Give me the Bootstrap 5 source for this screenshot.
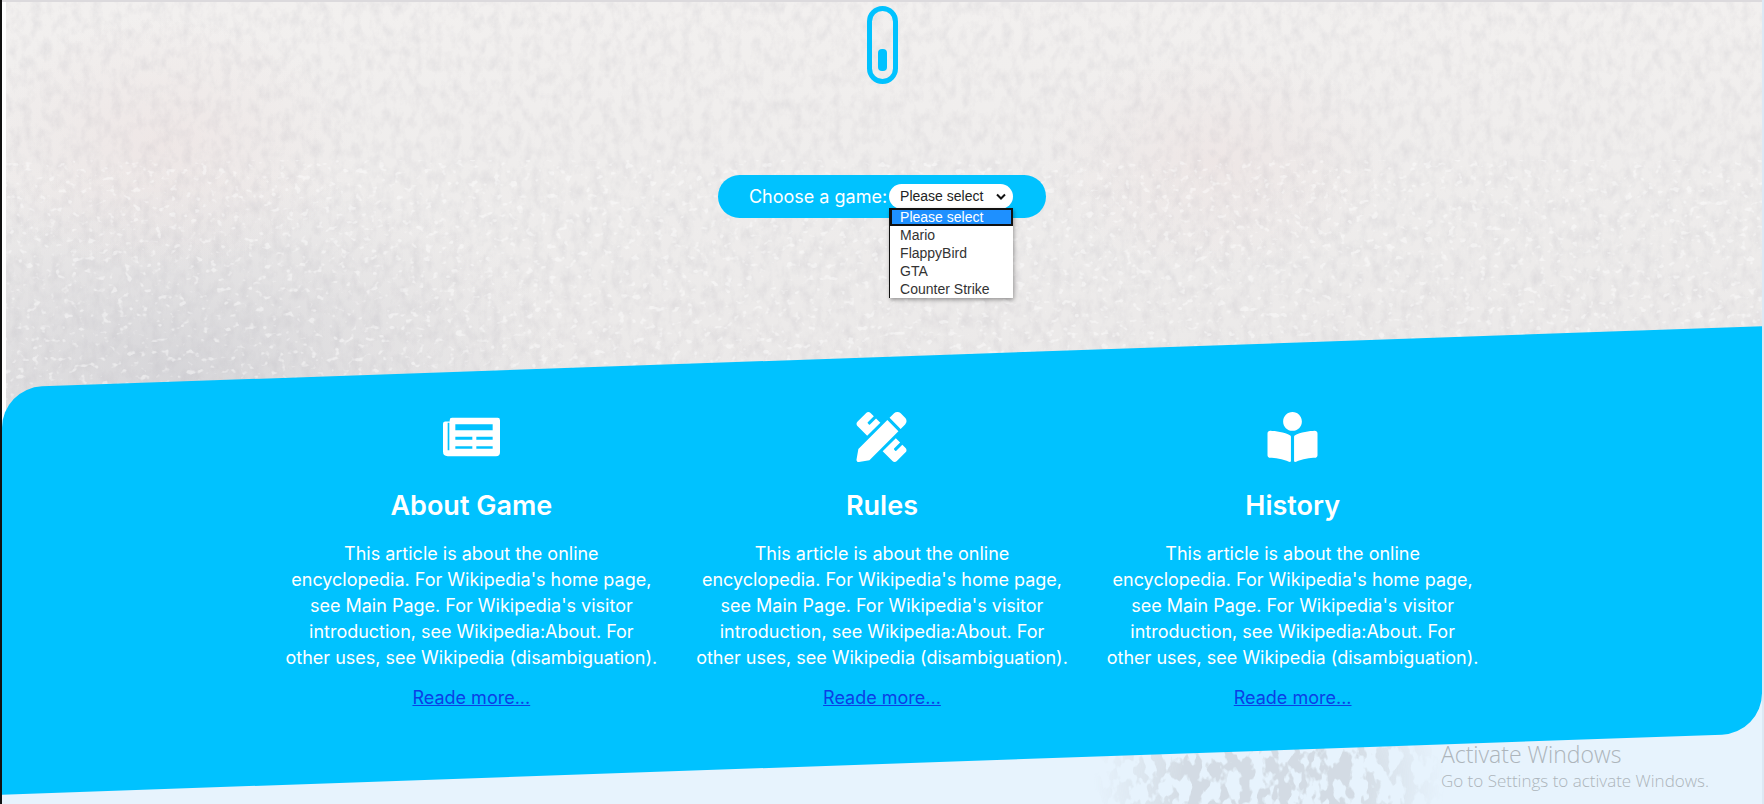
<!DOCTYPE html>
<html lang="en">
<head>
<meta charset="utf-8">
<meta name="viewport" content="width=device-width, initial-scale=1">
<title>Choose a game</title>
<link href="https://cdn.jsdelivr.net/npm/bootstrap@5.3.0/dist/css/bootstrap.min.css" rel="stylesheet">
<style>
:root { --sky: #00c2ff; }
body { font-family: Inter, "Open Sans", sans-serif; font-size: 18px; line-height: 26px; background: #e7f3fd; }
.page { min-height: 100vh; border-left: 2px solid #111; border-right: 2px solid #dbe9f5; isolation: isolate; }
.backdrop { z-index: -1; }
.hero { border-top: 2px solid #dcdadd; padding-top: 4px; min-height: 357px; }
.mouse { width: 31px; height: 78px; border: 5px solid var(--sky); border-radius: 16px; padding-bottom: 8px; }
.mouse-wheel { width: 9px; height: 22px; border-radius: 4px; background: var(--sky); }
.picker { margin-top: 91px; height: 43px; padding: 0 33px 0 31px; border-radius: 22px; background: var(--sky); gap: 2px; }
.picker select { width: 124px; height: 25px; padding: 0 22px 0 11px; border: 0; border-radius: 13px; background: #fff; color: #222; appearance: none; font: 14px/25px "Liberation Sans", Arial, sans-serif; }
.chevron { right: 7px; top: 9px; }
.options { top: 24px; left: 0; width: 124px; border-left: 1px solid #111; background: #fff; box-shadow: 1px 2px 4px rgba(0,0,0,.35); font: 14px/18px "Liberation Sans", Arial, sans-serif; z-index: 5; }
.options button { height: 18px; padding: 0 10px; border: 0; background: none; color: #333; text-align: left; }
.options button.chosen { background: #1e90ff; color: #fff; padding: 0 8px; border: 2px solid #111; line-height: 14px; }
.band { padding: 55px 0 53px; }
.band::before { content: ""; position: absolute; inset: 0; z-index: -1; background: var(--sky); border-radius: 40px 0 40px 0; transform: skewY(-2deg); }
.band-inner { width: 70%; }
.topic-icon { height: 50px; fill: #fff; }
.topic h2 { font-size: 27px; line-height: 32px; font-weight: 600; margin: 28px 0 19px; }
.topic p { margin-bottom: 14px; white-space: nowrap; }
.topic a { color: #0b3fe6; }
.watermark { right: 53px; bottom: 11px; color: #adb5bb; font-family: "Open Sans", sans-serif; font-weight: 300; white-space: nowrap; }
.watermark-title { font-size: 23px; line-height: 30px; }
.watermark-note { font-size: 17px; line-height: 24px; }
</style>
</head>
<body>
<div class="page position-relative d-flex flex-column overflow-hidden">
  <svg class="backdrop position-absolute top-0 start-0 w-100 h-100" aria-hidden="true">
    <defs>
      <linearGradient id="frost" x1="0" y1="0" x2="0" y2="1"><stop offset="0" stop-color="#f2f0ef"/><stop offset="1" stop-color="#e9e7e7"/></linearGradient>
      <radialGradient id="shade"><stop offset="0" stop-color="#cdcdd2" stop-opacity=".7"/><stop offset="1" stop-color="#d3d3d7" stop-opacity="0"/></radialGradient>
      <radialGradient id="blush"><stop offset="0" stop-color="#ecdedd" stop-opacity=".45"/><stop offset="1" stop-color="#ecdedd" stop-opacity="0"/></radialGradient>
      <radialGradient id="spot"><stop offset="0" stop-color="#fff"/><stop offset=".5" stop-color="#fff"/><stop offset="1" stop-color="#fff" stop-opacity="0"/></radialGradient>
      <filter id="grain" x="0" y="0" width="100%" height="100%" color-interpolation-filters="sRGB"><feTurbulence type="fractalNoise" baseFrequency=".1 .07" numOctaves="4" seed="4"/><feColorMatrix values="0 0 0 0 .72  0 0 0 0 .71  0 0 0 0 .74  1 0 0 0 -.4"/></filter>
      <filter id="flecks" x="0" y="0" width="100%" height="100%"><feTurbulence type="fractalNoise" baseFrequency=".13 .16" numOctaves="2" seed="9"/><feColorMatrix values="0 0 0 0 1  0 0 0 0 1  0 0 0 0 1  0 7 0 0 -4.3"/></filter>
      <filter id="leaves" x="0" y="0" width="100%" height="100%" color-interpolation-filters="sRGB"><feTurbulence type="fractalNoise" baseFrequency=".08 .05" numOctaves="3" seed="12"/><feColorMatrix values="0 0 0 0 .81  0 0 0 0 .84  0 0 0 0 .87  12 0 0 0 -5.6"/></filter>
      <mask id="patch"><ellipse cx="72%" cy="97%" rx="10%" ry="17%" fill="url(#spot)"/></mask>
    </defs>
    <rect width="100%" height="60%" fill="url(#frost)"/>
    <ellipse cx="10%" cy="46%" rx="22%" ry="25%" fill="url(#shade)"/>
    <ellipse cx="9%" cy="18%" rx="11%" ry="16%" fill="url(#blush)"/>
    <ellipse cx="69%" cy="20%" rx="10%" ry="14%" fill="url(#blush)"/>
    <rect width="100%" height="60%" filter="url(#grain)" opacity=".45"/>
    <rect y="20%" width="100%" height="40%" filter="url(#flecks)" opacity=".45"/>
    <rect width="4" height="60%" fill="#fff"/>
    <rect y="85%" width="100%" height="15%" filter="url(#leaves)" mask="url(#patch)" opacity=".8"/>
  </svg>

  <header class="hero d-flex flex-column align-items-center">
    <div class="mouse d-flex align-items-end justify-content-center"><div class="mouse-wheel"></div></div>
    <form class="picker d-flex align-items-center text-white">
      <label for="game">Choose a game:</label>
      <div class="position-relative">
        <select id="game" class="d-block">
          <option>Please select</option><option>Mario</option><option>FlappyBird</option><option>GTA</option><option>Counter Strike</option>
        </select>
        <svg class="chevron position-absolute pe-none" width="10" height="8" viewBox="0 0 10 8" aria-hidden="true"><path d="M1 1.5l4 4 4-4" fill="none" stroke="#111" stroke-width="2"/></svg>
        <div class="options position-absolute d-flex flex-column">
          <button type="button" class="chosen">Please select</button>
          <button type="button">Mario</button>
          <button type="button">FlappyBird</button>
          <button type="button">GTA</button>
          <button type="button">Counter Strike</button>
        </div>
      </div>
    </form>
  </header>

  <section class="band position-relative text-white text-center">
    <div class="band-inner mx-auto">
      <div class="row g-0">
        <article class="topic col-4">
          <svg class="topic-icon" width="57" viewBox="40 51 171 115" aria-hidden="true"><path fill-rule="evenodd" d="M67 51H204q7 0 7 7V154q0 12-12 12H54q-14 0-14-14V69q0-7 7-7H60V58q0-7 7-7zM54 66V148H59V66zM77 70V88H189V70zM77 108V117H128V108zM140 108V117H189V108zM77 136V144H128V136zM140 136V144H189V136z"/></svg>
          <h2>About Game</h2>
          <p>This article is about the online<br>encyclopedia. For Wikipedia's home page,<br>see Main Page. For Wikipedia's visitor<br>introduction, see Wikipedia:About. For<br>other uses, see Wikipedia (disambiguation).</p>
          <a href="#about">Reade more...</a>
        </article>
        <article class="topic col-4">
          <svg class="topic-icon" width="51" viewBox="0 0 512 512" aria-hidden="true"><path d="M109.46 244.04l134.58-134.56-44.12-44.12-61.68 61.68a7.919 7.919 0 0 1-11.21 0l-11.21-11.21c-3.1-3.1-3.1-8.12 0-11.21l61.68-61.68-33.64-33.65C131.47-3.1 111.39-3.1 99 9.29L9.29 99c-12.38 12.39-12.39 32.47 0 44.86l100.17 100.18zm388.47-116.8c18.76-18.76 18.75-49.17 0-67.93l-45.25-45.25c-18.76-18.76-49.18-18.76-67.95 0l-46.02 46.01 113.2 113.2 46.02-46.03zM316.08 82.71l-297 296.96L.32 487.11c-2.53 14.49 10.09 27.11 24.59 24.56l107.45-18.84L429.28 195.9 316.08 82.71zm186.63 285.43l-33.64-33.64-61.68 61.68c-3.1 3.1-8.12 3.1-11.21 0l-11.21-11.21c-3.09-3.1-3.09-8.12 0-11.21l61.68-61.68-44.14-44.14L267.93 402.5l100.21 100.2c12.39 12.39 32.47 12.39 44.86 0l89.71-89.7c12.39-12.39 12.39-32.47 0-44.86z"/></svg>
          <h2>Rules</h2>
          <p>This article is about the online<br>encyclopedia. For Wikipedia's home page,<br>see Main Page. For Wikipedia's visitor<br>introduction, see Wikipedia:About. For<br>other uses, see Wikipedia (disambiguation).</p>
          <a href="#rules">Reade more...</a>
        </article>
        <article class="topic col-4">
          <svg class="topic-icon" width="51" viewBox="0 0 512 512" aria-hidden="true"><path d="M352 96c0-53.02-42.98-96-96-96s-96 42.98-96 96 42.98 96 96 96 96-42.98 96-96zM233.59 241.1c-59.33-36.32-155.43-46.3-203.79-49.05C13.55 191.13 0 203.51 0 219.14v222.8c0 14.33 11.59 26.28 26.49 27.05 43.66 2.29 131.99 10.68 193.04 41.43 9.37 4.72 20.48-1.71 20.48-11.87V252.56c-.01-4.67-2.32-8.95-6.42-11.46zm248.61-49.05c-48.35 2.74-144.46 12.73-203.78 49.05-4.1 2.51-6.41 6.96-6.41 11.63v245.79c0 10.19 11.14 16.63 20.54 11.9 61.04-30.72 149.32-39.11 192.97-41.4 14.9-.78 26.49-12.73 26.49-27.06V219.14c-.01-15.63-13.56-28.01-29.81-27.09z"/></svg>
          <h2>History</h2>
          <p>This article is about the online<br>encyclopedia. For Wikipedia's home page,<br>see Main Page. For Wikipedia's visitor<br>introduction, see Wikipedia:About. For<br>other uses, see Wikipedia (disambiguation).</p>
          <a href="#history">Reade more...</a>
        </article>
      </div>
    </div>
  </section>

  <aside class="watermark position-absolute pe-none">
    <div class="watermark-title">Activate Windows</div>
    <div class="watermark-note">Go to Settings to activate Windows.</div>
  </aside>
</div>
<script src="https://cdn.jsdelivr.net/npm/bootstrap@5.3.0/dist/js/bootstrap.bundle.min.js"></script>
</body>
</html>
